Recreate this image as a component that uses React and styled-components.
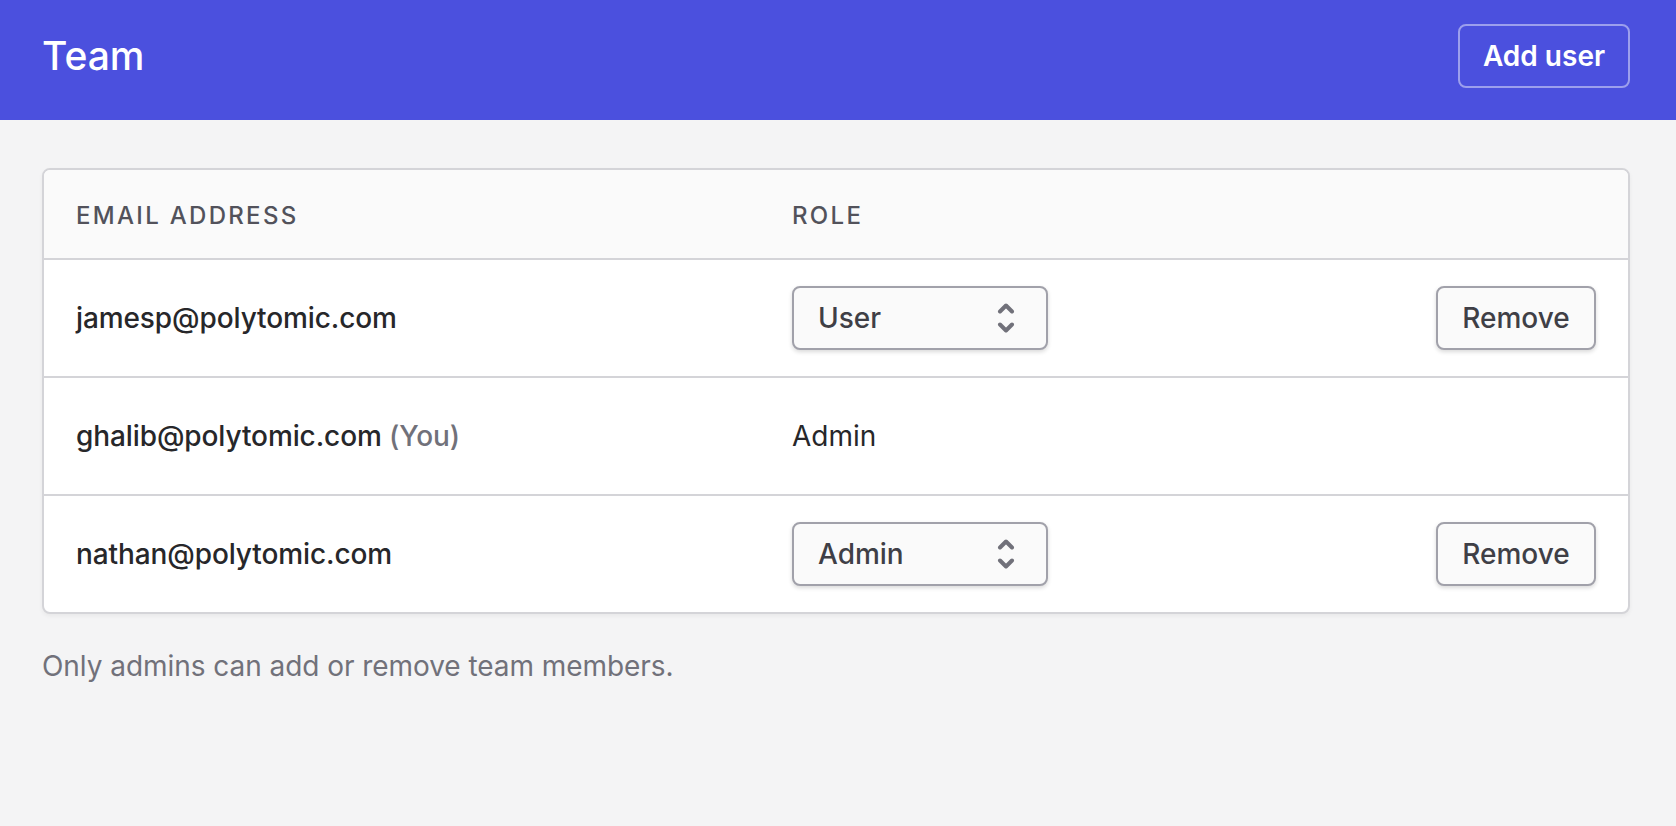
import React from 'react';
import styled, { createGlobalStyle } from 'styled-components';

const GlobalStyle = createGlobalStyle`
  html, body {
    margin: 0;
    padding: 0;
    background: #f4f4f5;
    font-family: Inter, "Liberation Sans", sans-serif;
  }
`;

const Page = styled.div`
  min-height: 826px;
  background: #f4f4f5;
`;

const Header = styled.header`
  height: 120px;
  box-sizing: border-box;
  padding: 24px 46px 32px 42px;
  background: #4b50de;
  display: flex;
  align-items: center;
  justify-content: space-between;
`;

const Title = styled.h1`
  margin: 0 0 2px;
  font-size: 39px;
  font-weight: 500;
  color: #fff;
`;

const AddButton = styled.button`
  width: 172px;
  height: 64px;
  box-sizing: border-box;
  padding: 0;
  border: 2px solid rgba(255, 255, 255, 0.45);
  border-radius: 8px;
  background: transparent;
  color: #fff;
  font: 600 28px Inter, sans-serif;
`;

const Content = styled.main`
  padding: 48px 46px 0 42px;
`;

const Card = styled.section`
  border: 2px solid #d4d4d8;
  border-radius: 8px;
  background: #fff;
  overflow: hidden;
  box-shadow: 0 2px 4px rgba(0, 0, 0, 0.05);
`;

const HeadRow = styled.div`
  height: 88px;
  box-sizing: border-box;
  padding: 2px 32px 0;
  background: #fafafa;
  display: grid;
  grid-template-columns: 716px 1fr;
  align-items: center;
  font-size: 24px;
  font-weight: 500;
  letter-spacing: 2.3px;
  color: #52525b;
`;

const Row = styled.div`
  height: 118px;
  box-sizing: border-box;
  padding: 0 32px;
  border-top: 2px solid #d4d4d8;
  display: grid;
  grid-template-columns: 716px 1fr auto;
  align-items: center;
  font-size: 28px;
  color: #27272a;
`;

const Email = styled.div`
  font-weight: 500;
  letter-spacing: -0.1px;
`;

const You = styled.span`
  color: #71717a;
`;

const Select = styled.div`
  width: 256px;
  height: 64px;
  box-sizing: border-box;
  padding: 0 31px 0 24px;
  border: 2px solid #a1a1aa;
  border-radius: 8px;
  background: #fafafa;
  box-shadow: 0 2px 4px rgba(0, 0, 0, 0.15);
  display: flex;
  align-items: center;
  justify-content: space-between;
  font-weight: 500;
  color: #3f3f46;
`;

const RemoveButton = styled.button`
  width: 160px;
  height: 64px;
  box-sizing: border-box;
  padding: 0;
  border: 2px solid #a1a1aa;
  border-radius: 8px;
  background: #fafafa;
  box-shadow: 0 2px 4px rgba(0, 0, 0, 0.15);
  color: #3f3f46;
  font: 500 28px Inter, sans-serif;
`;

const Note = styled.p`
  margin: 35px 0 0;
  font-size: 28px;
  letter-spacing: -0.05px;
  color: #71717a;
`;

const Chevrons = () => (
  <svg width="18" height="30" viewBox="0 0 18 30" fill="none" stroke="#71717a" strokeWidth="4" strokeLinecap="round" strokeLinejoin="round">
    <path d="M3 8.5 9 2.5l6 6" />
    <path d="M3 21.5 9 27.5l6-6" />
  </svg>
);

const users = [
  { email: 'jamesp@polytomic.com', role: 'User' },
  { email: 'ghalib@polytomic.com', role: 'Admin', self: true },
  { email: 'nathan@polytomic.com', role: 'Admin' },
];

export default function App() {
  return (
    <Page>
      <GlobalStyle />
      <Header>
        <Title>Team</Title>
        <AddButton>Add user</AddButton>
      </Header>
      <Content>
        <Card>
          <HeadRow>
            <div>EMAIL ADDRESS</div>
            <div>ROLE</div>
          </HeadRow>
          {users.map(user => (
            <Row key={user.email}>
              <Email>
                {user.email}
                {user.self && <You> (You)</You>}
              </Email>
              {user.self ? (
                <div>{user.role}</div>
              ) : (
                <Select>
                  {user.role}
                  <Chevrons />
                </Select>
              )}
              {!user.self && <RemoveButton>Remove</RemoveButton>}
            </Row>
          ))}
        </Card>
        <Note>Only admins can add or remove team members.</Note>
      </Content>
    </Page>
  );
}
